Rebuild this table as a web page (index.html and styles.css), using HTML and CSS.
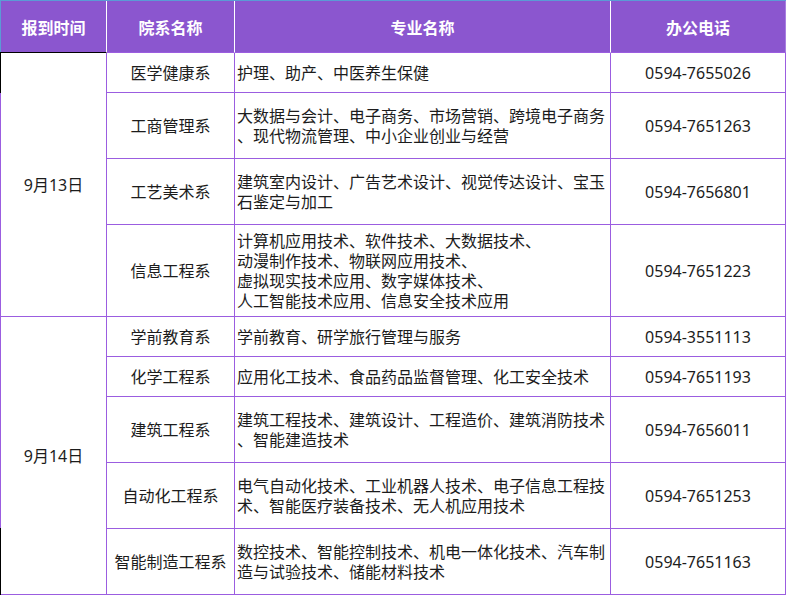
FILE: index.html
```html
<!DOCTYPE html>
<html lang="zh-CN">
<head>
<meta charset="utf-8">
<title>报到时间安排</title>
<link rel="stylesheet" href="styles.css">
</head>
<body>
<div class="sheet">
<table class="schedule">
  <colgroup>
    <col class="c-date">
    <col class="c-dept">
    <col class="c-major">
    <col class="c-phone">
  </colgroup>
  <thead>
    <tr class="h-head">
      <th class="th-date">报到时间</th>
      <th>院系名称</th>
      <th>专业名称</th>
      <th>办公电话</th>
    </tr>
  </thead>
  <tbody>
    <tr class="h1">
      <td class="date" rowspan="4">9月13日</td>
      <td class="dept">医学健康系</td>
      <td class="major">护理、助产、中医养生保健</td>
      <td class="phone">0594-7655026</td>
    </tr>
    <tr class="h2">
      <td class="dept">工商管理系</td>
      <td class="major">大数据与会计、电子商务、市场营销、跨境电子商务<br>、现代物流管理、中小企业创业与经营</td>
      <td class="phone">0594-7651263</td>
    </tr>
    <tr class="h2">
      <td class="dept">工艺美术系</td>
      <td class="major">建筑室内设计、广告艺术设计、视觉传达设计、宝玉<br>石鉴定与加工</td>
      <td class="phone">0594-7656801</td>
    </tr>
    <tr class="h4">
      <td class="dept">信息工程系</td>
      <td class="major">计算机应用技术、软件技术、大数据技术、<br>动漫制作技术、物联网应用技术、<br>虚拟现实技术应用、数字媒体技术、<br>人工智能技术应用、信息安全技术应用</td>
      <td class="phone">0594-7651223</td>
    </tr>
    <tr class="h1">
      <td class="date" rowspan="5">9月14日</td>
      <td class="dept">学前教育系</td>
      <td class="major">学前教育、研学旅行管理与服务</td>
      <td class="phone">0594-3551113</td>
    </tr>
    <tr class="h1">
      <td class="dept">化学工程系</td>
      <td class="major">应用化工技术、食品药品监督管理、化工安全技术</td>
      <td class="phone">0594-7651193</td>
    </tr>
    <tr class="h2">
      <td class="dept">建筑工程系</td>
      <td class="major">建筑工程技术、建筑设计、工程造价、建筑消防技术<br>、智能建造技术</td>
      <td class="phone">0594-7656011</td>
    </tr>
    <tr class="h2">
      <td class="dept">自动化工程系</td>
      <td class="major">电气自动化技术、工业机器人技术、电子信息工程技<br>术、智能医疗装备技术、无人机应用技术</td>
      <td class="phone">0594-7651253</td>
    </tr>
    <tr class="h2">
      <td class="dept">智能制造工程系</td>
      <td class="major">数控技术、智能控制技术、机电一体化技术、汽车制<br>造与试验技术、储能材料技术</td>
      <td class="phone">0594-7651163</td>
    </tr>
  </tbody>
</table>
</div>
</body>
</html>
```

FILE: styles.css
```css
html, body {
  margin: 0;
  padding: 0;
  background: #ffffff;
}

body {
  font-family: "Noto Sans", "Noto Sans CJK SC", sans-serif;
  font-size: 16px;
  color: #1c1c1c;
}

.sheet {
  width: 786px;
  height: 595px;
  padding: 1px 0 0 1px;
  box-sizing: border-box;
  background:
    linear-gradient(#5b9bd5, #5b9bd5) left top / 100% 1px no-repeat,
    linear-gradient(to bottom,
      #5b9bd5 0 52px,
      #000000 52px 93px,
      #9b5de0 93px 528px,
      #000000 528px 100%) left top / 1px 100% no-repeat;
}

.schedule {
  width: 785px;
  border-collapse: separate;
  border-spacing: 0;
  table-layout: fixed;
  background: #ffffff;
}

.c-date { width: 106px; }
.c-dept { width: 128px; }
.c-major { width: 376px; }
.c-phone { width: 175px; }

.schedule th,
.schedule td {
  box-sizing: border-box;
  padding: 0;
}

.schedule th {
  background: #8b56cf;
  color: #ffffff;
  font-weight: bold;
  font-size: 16px;
  text-align: center;
  border-right: 1px solid #ffffff;
  border-bottom: 1px solid #9b5de0;
}

.schedule th:last-child {
  border-right: 1px solid #a77ee0;
}

.schedule th.th-date {
  border-bottom: 1px solid #000000;
}

.h-head { height: 52px; }
.h1 { height: 40px; }
.h2 { height: 66px; }
.h4 { height: 92px; }

.schedule td {
  border-right: 1px solid #9b5de0;
  border-bottom: 1px solid #9b5de0;
  line-height: 20px;
  vertical-align: middle;
}

.schedule td.date {
  text-align: center;
}

.schedule td.dept {
  text-align: center;
  white-space: nowrap;
}

.schedule td.major {
  text-align: left;
  padding-left: 2px;
  white-space: nowrap;
  overflow: hidden;
}

.schedule td.phone {
  text-align: center;
}
```
